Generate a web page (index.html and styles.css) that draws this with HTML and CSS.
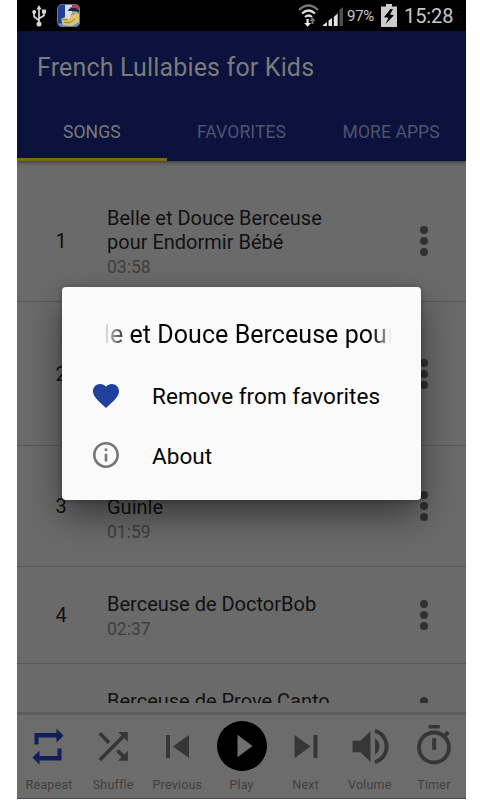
FILE: index.html
```html
<!DOCTYPE html>
<html lang="en">
<head>
<meta charset="utf-8">
<title>French Lullabies for Kids</title>
<link rel="stylesheet" href="styles.css">
</head>
<body>
<main class="phone">
  <div class="status">
    <svg class="usb" width="14" height="22" viewBox="0 0 14 22"><g fill="none" stroke="#d6d6d6" stroke-width="1.7"><path d="M7 19V3M7 15.5L2 11.5V7M7 13.5l5-3V6"/></g><g fill="#d6d6d6"><path d="M7 0l2.6 4.5H4.4zM10 4.5h4v4h-4z"/><circle cx="2.2" cy="7" r="2"/><circle cx="7" cy="19" r="2.5"/></g></svg>
    <svg class="app-icon" width="23" height="23" viewBox="0 0 23 23"><defs><clipPath id="r"><rect width="23" height="23" rx="5"/></clipPath></defs><g clip-path="url(#r)"><path fill="#233c94" d="M0 0h23v23H0z"/><path fill="#d8dce5" d="M8 0h7v15H8z"/><path fill="#ad3540" d="M15 0h8v5h-8z"/><path fill="#8d94ad" d="M15 5h8v9h-8z"/><path fill="#6c91c7" d="M0 23l3-4 8 1 12-7v10z"/><path fill="#dcc66d" d="M4 15l4-2 4 2 2-5 4-2 5 3-1 7-7 4-9-1z"/><path fill="#1c2546" d="M11 7c1-5 11-5 12 2l-3-1.500-5-.5z"/><path fill="#c54652" d="M12 4.500c3-3 8-3 10 1-4-2-7-2-10-1z"/><path fill="none" stroke="#8a7652" d="M7 18c4 2 8 0 11-3M14 10.500l4-1M5 15.500l6 .5"/></g><rect x=".5" y=".5" width="22" height="22" rx="5" fill="none" stroke="#67789d"/></svg>
    <span class="spacer"></span>
    <svg class="wifi" width="21" height="23" viewBox="0 0 21 23"><g fill="none" stroke-width="2.2"><path stroke="#777" d="M1 6q9.500-9 19 0"/><path stroke="#ddd" d="M4 9.500q6.500-6 13 0M7 13q3.500-3 7 0"/></g><path fill="#eee" d="M8.500 15h2.200v4H13l-3.400 3.800L6.200 19h2.300z"/><path fill="#777" d="M13.500 20v-3h-2l3-3.700 3 3.700h-2v3z"/></svg>
    <svg class="signal" width="21" height="20" viewBox="0 0 21 20"><path fill="#e2e2e2" d="M0 20v-1l4-3v4zM5.500 20v-5.500L9 12v8zM10.800 20v-9l3.200-3v12z"/><path fill="#999" d="M14 8l1-1v13h-1z"/><path fill="#505050" d="M16.500 20V4L20 1v19z"/></svg>
    <span class="percent">97%</span>
    <svg class="battery" width="16" height="23" viewBox="0 0 16 23"><path fill="#ccc" d="M5 0h6v2.500h5V23H0V2.500h5z"/><path d="M9.500 5L3 13.200l4.500.5L4.500 20 13 11.200l-4-.8L12 5z"/></svg>
    <span class="time">15:28</span>
  </div>
  <header class="appbar">
    <h1>French Lullabies for Kids</h1>
    <nav class="tabs"><span class="tab active">SONGS</span><span class="tab">FAVORITES</span><span class="tab">MORE APPS</span></nav>
  </header>
  <section class="list">
    <div class="row"><span class="num">1</span><div class="info"><div class="name">Belle et Douce Berceuse<br>pour Endormir Bébé</div><div class="dur">03:58</div></div><span class="dots"><i></i><i></i><i></i></span></div>
    <div class="row tall"><span class="num">2</span><div class="info"></div><span class="dots"><i></i><i></i><i></i></span></div>
    <div class="row"><span class="num">3</span><div class="info"><div class="name"><br>Guinle</div><div class="dur">01:59</div></div><span class="dots"><i></i><i></i><i></i></span></div>
    <div class="row"><span class="num">4</span><div class="info"><div class="name">Berceuse de DoctorBob</div><div class="dur">02:37</div></div><span class="dots"><i></i><i></i><i></i></span></div>
    <div class="row"><span class="num"></span><div class="info"><div class="name">Berceuse de Prove Canto</div><div class="dur"></div></div><span class="dots"><i></i><i></i><i></i></span></div>
  </section>
  <footer class="player">
    <div class="ctl"><svg width="36" height="40" viewBox="0 0 36 40"><path fill="#101e59" d="M4.500 21V9.500h22V5l7 7-7 7v-5h-18v7zM31.500 25v12h-22v4l-7-7 7-7v5.500h18V25z" transform="translate(-1 -2.500)"/></svg><span>Reapeat</span></div>
    <div class="ctl"><svg width="36" height="40" viewBox="0 0 36 40"><path fill="#363636" d="M15.400 16.900L6 7.500 3.500 10l9.400 9.400zM23 7.500l3.600 3.600L3.500 34.300 6 36.800l23.200-23.200 3.600 3.600V7.500zM23.700 24.700l-2.500 2.500 5.300 5.300-3.600 3.700h10v-10l-3.700 3.700z" transform="translate(0 -1.500)"/></svg><span>Shuffle</span></div>
    <div class="ctl"><svg width="36" height="40" viewBox="0 0 36 40"><path fill="#363636" d="M7 9h4v23H7zM30 9v23L14 20.500z"/></svg><span>Previous</span></div>
    <div class="ctl play"><svg width="50" height="50" viewBox="0 0 50 50"><circle cx="25" cy="25" r="25" fill="#000"/><path fill="#707070" d="M20.500 13.700v22.600L35.500 25z"/></svg><span>Play</span></div>
    <div class="ctl"><svg width="36" height="40" viewBox="0 0 36 40"><path fill="#363636" d="M25.500 9h4v23h-4zM6.500 9v23l16-11.500z"/></svg><span>Next</span></div>
    <div class="ctl"><svg width="38" height="40" viewBox="0 0 38 40"><path fill="#363636" d="M1.500 14.800h8L19.500 5v31L9.500 26.200h-8zM24 12.500c6 3 6 13 0 16z"/><path fill="none" stroke="#363636" stroke-width="3.800" d="M24 4.800c15.500 5 15.500 26.400 0 31.400"/></svg><span>Volume</span></div>
    <div class="ctl"><svg width="36" height="42" viewBox="0 0 36 42"><path fill="#363636" d="M12.500 0h11.300v3.600H12.500zM16.200 13.300h4v11.500h-4zM28 9l2.800-3.200 2.800 2.600-3 3.200z"/><circle cx="18" cy="22.500" r="15" fill="none" stroke="#363636" stroke-width="3.800"/></svg><span>Timer</span></div>
  </footer>
  <div class="dialog">
    <div class="marquee"><span>e et Douce Berceuse pou</span></div>
    <div class="item"><svg width="26" height="24" viewBox="2 3 20 18.350"><path fill="#213f9d" d="M12 21.350l-1.450-1.320C5.400 15.360 2 12.280 2 8.500 2 5.420 4.420 3 7.500 3c1.740 0 3.410.810 4.500 2.090C13.090 3.810 14.760 3 16.500 3 19.580 3 22 5.420 22 8.500c0 3.780-3.400 6.860-8.550 11.540z"/></svg><span class="remove">Remove from favorites</span></div>
    <div class="item about"><svg width="26" height="26" viewBox="2 2 20 20"><path fill="#757575" d="M11 17h2v-6h-2zm1-15C6.480 2 2 6.480 2 12s4.480 10 10 10 10-4.480 10-10S17.520 2 12 2zm0 18c-4.410 0-8-3.590-8-8s3.590-8 8-8 8 3.590 8 8-3.590 8-8 8zM11 9h2V7h-2z"/></svg><span>About</span></div>
  </div>
</main>
</body>
</html>
```
FILE: styles.css
```css
* { box-sizing: border-box; }
body { margin: 0; background: #fff; font-family: Roboto, "Liberation Sans", sans-serif; }
svg { display: block; flex: none; }
.phone { position: relative; width: 449px; height: 799px; margin-left: 17px; background: #6a6a6a; overflow: hidden; display: flex; flex-direction: column; }
.status { height: 31px; flex: none; background: #000; display: flex; align-items: center; padding: 0 13px 0 15px; color: #c8c8c8; }
.app-icon { margin-left: 11px; margin-right: 1px; }
.spacer { flex: 1; }
.signal { margin: 1px 3px 0 4px; }
.percent { font-size: 15px; width: 28px; letter-spacing: -.3px; }
.battery { margin: -1px 7px 0 6px; }
.time { font-size: 20px; width: 49px; letter-spacing: -.1px; }
.appbar { height: 130px; flex: none; background: #0b123e; display: flex; flex-direction: column; justify-content: space-between; box-shadow: 0 1px 4px rgba(0,0,0,.5); position: relative; }
h1 { margin: 21px 0 0 20px; font-size: 25px; line-height: 32px; font-weight: 400; letter-spacing: .16px; color: #7b7b77; white-space: nowrap; }
.tabs { display: grid; grid-template-columns: repeat(3, 1fr); height: 60px; }
.tab { height: 60px; line-height: 63px; text-align: center; font-size: 17.500px; letter-spacing: .1px; color: #50536a; }
.tab.active { color: #7b7b77; border-bottom: 3px solid #7b6b00; }
.list { height: 542px; flex: none; overflow: hidden; padding-top: 20px; }
.row { min-height: 97px; display: grid; grid-template-columns: 88px 1fr 84px; align-items: center; border-bottom: 1px solid #585858; }
.row.tall { height: 144px; }
.num { text-align: center; font-size: 20px; color: #111; }
.info { align-self: start; padding: 25px 0 22px 2px; white-space: nowrap; }
.name { font-size: 20px; line-height: 24px; color: #111; }
.dur { font-size: 17.500px; line-height: 27px; height: 25px; color: #3e3e3e; }
.dots { justify-self: center; display: grid; gap: 3px; }
.dots i { width: 8px; height: 8px; border-radius: 50%; background: #303030; }
.player { margin-top: 9px; height: 87px; flex: none; border-top: 3px solid #5e5e5e; border-bottom: 1px solid #484848; background: #6c6c6c; display: grid; grid-template-columns: repeat(7, 1fr); }
.ctl { display: grid; grid-template-rows: 61px 18px; justify-items: center; align-items: center; font-size: 12.500px; line-height: 18px; color: #404040; }
.ctl svg { margin-top: 1px; }
.ctl span { letter-spacing: .2px; }
.ctl.play svg { margin-left: 1px; }
.dialog { position: absolute; left: 45px; top: 287px; width: 359px; height: 213px; border-radius: 4px; background: #fafafa; padding: 27px 30px 0 31px; box-shadow: 0 16px 34px rgba(0,0,0,.45), 0 1px 5px rgba(0,0,0,.25); color: #050505; }
.marquee { position: relative; margin-left: 12px; height: 42px; width: 287px; overflow: hidden; font-size: 25px; line-height: 42px; white-space: nowrap; }
.marquee span { padding-left: 5px; letter-spacing: .05px; background: linear-gradient(90deg, #aaa 5px, #777 11px, #050505 24px, #050505 267px, #aaa 283px); -webkit-background-clip: text; background-clip: text; color: transparent; }
.marquee::before, .marquee::after { content: ""; position: absolute; left: 1px; top: 10px; width: 2px; height: 19px; background: #d5d5d5; }
.marquee::after { left: 284px; top: 15px; height: 14px; background: #eee; }
.item { height: 60px; display: flex; align-items: center; gap: 33px; font-size: 22.500px; letter-spacing: .04px; white-space: nowrap; }
.item svg { width: 26px; }
.about svg { margin-top: -2px; }
.item:nth-child(2) { margin-top: 10px; }
```
